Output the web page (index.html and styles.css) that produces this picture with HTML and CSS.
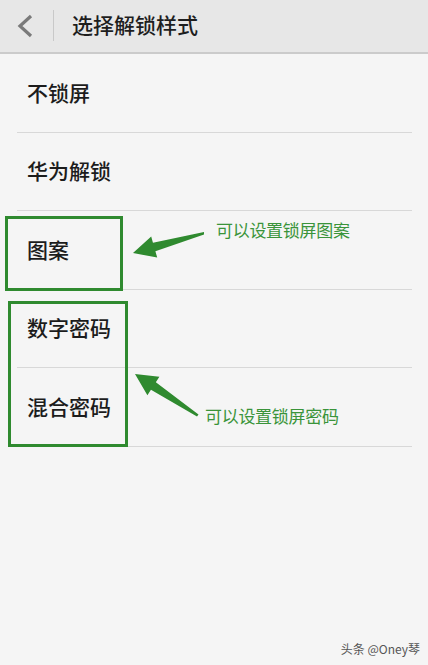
FILE: index.html
```html
<!DOCTYPE html>
<html lang="zh">
<head>
<meta charset="utf-8">
<link rel="stylesheet" href="styles.css">
</head>
<body>
<div class="screen">
  <header class="topbar">
    <div class="back">
      <svg width="20" height="24" viewBox="0 0 20 24"><path d="M15 2 L4 12 L15 22" fill="none" stroke="#7a7a7a" stroke-width="3.2" stroke-linejoin="miter"/></svg>
    </div>
    <div class="vdiv"></div>
    <h1 class="title">选择解锁样式</h1>
  </header>
  <ul class="list">
    <li class="row">不锁屏</li>
    <li class="row">华为解锁</li>
    <li class="row">图案</li>
    <li class="row">数字密码</li>
    <li class="row">混合密码</li>
  </ul>

  <div class="box box1"></div>
  <div class="box box2"></div>
  <svg class="arrows" width="428" height="665" viewBox="0 0 428 665">
    <polygon fill="#2f8a2f" points="204,232 152.96,242.7 151.2,236.4 133,253 157.2,257.6 155.4,251.3 204,234.5"/>
    <polygon fill="#2f8a2f" points="198.5,414.5 155.85,382.2 159.4,376.8 135,374 147.4,395.2 150.95,389.8 197,416.5"/>
  </svg>
  <div class="note note1">可以设置锁屏图案</div>
  <div class="note note2">可以设置锁屏密码</div>
  <div class="mark">头条 @Oney琴</div>
</div>
</body>
</html>
```
FILE: styles.css
```css
* { box-sizing: border-box; }
html, body { margin: 0; padding: 0; }
body {
  background: #f5f5f5;
  font-family: "Noto Sans CJK SC", "Noto Sans", sans-serif;
}
.screen {
  position: relative;
  width: 428px;
  height: 665px;
  overflow: hidden;
  background: #f5f5f5;
}
.topbar {
  height: 54px;
  background: #e7e7e7;
  border-bottom: 2px solid #cbcbcb;
  display: flex;
  align-items: center;
}
.back {
  width: 53px;
  padding-left: 16px;
  display: flex;
  align-items: center;
  height: 24px;
}
.back svg { display: block; }
.vdiv {
  width: 1px;
  height: 31px;
  background: #c9c9c9;
  margin-top: -2px;
}
.title {
  margin: 0 0 0 18px;
  font-size: 21px;
  font-weight: 500;
  color: #1e1e1e;
  line-height: 1;
  margin-top: -4px;
}
.list {
  list-style: none;
  margin: 0 16px 0 17px;
  padding: 0;
}
.row {
  height: 78.5px;
  border-bottom: 1.5px solid #d8d8d8;
  display: flex;
  align-items: center;
  padding-left: 10px;
  font-size: 21px;
  font-weight: 500;
  color: #1c1c1c;
  padding-bottom: 2px;
}
.box {
  position: absolute;
  border: 3px solid #2f8a2f;
}
.box1 { left: 5px; top: 216px; width: 118px; height: 75px; }
.box2 { left: 8px; top: 301px; width: 120px; height: 146px; }
.arrows { position: absolute; left: 0; top: 0; }
.note {
  position: absolute;
  font-size: 17px;
  color: #3a943a;
  line-height: 1;
  letter-spacing: -0.3px;
}
.note1 { left: 216px; top: 221px; }
.note2 { left: 205px; top: 407px; }
.mark {
  position: absolute;
  right: 8px;
  top: 640px;
  font-size: 12px;
  color: #555;
  font-family: "Noto Sans CJK SC", "Liberation Sans", sans-serif;
}
```
